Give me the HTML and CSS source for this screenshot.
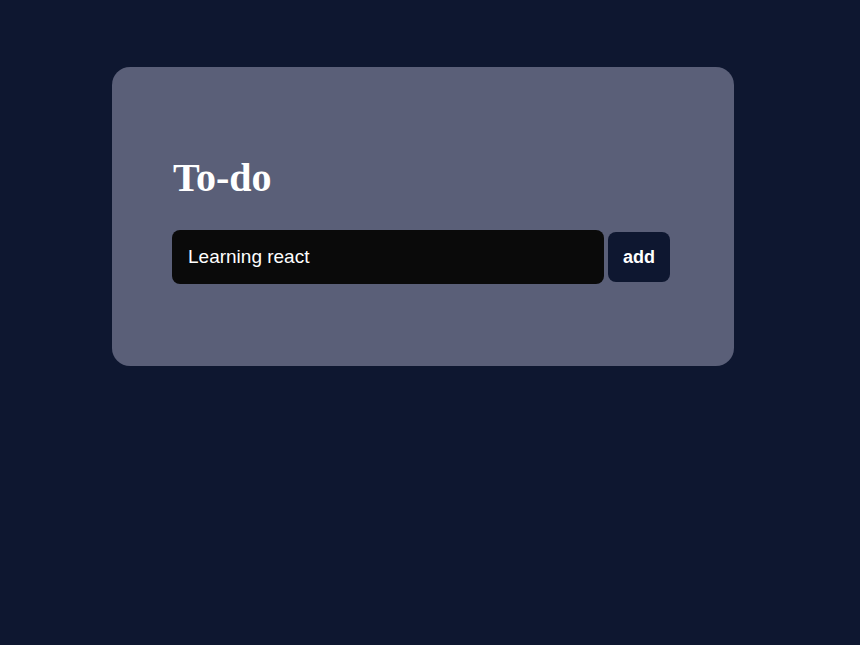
FILE: index.html
```html
<!DOCTYPE html>
<html>
<head>
<meta charset="utf-8">
<link rel="stylesheet" href="styles.css">
</head>
<body>
<div class="card">
  <h1 class="title">To-do</h1>
  <form class="row">
    <input class="task" type="text" value="Learning react">
    <button class="add" type="button">add</button>
  </form>
</div>
</body>
</html>
```
FILE: styles.css
```css
html, body {
  margin: 0;
  padding: 0;
  background: #0e1730;
  height: 100%;
}
body {
  padding: 67px 0 0 112px;
  box-sizing: border-box;
}
.card {
  width: 622px;
  height: 299px;
  box-sizing: border-box;
  background: #5a5f78;
  border-radius: 18px;
  padding: 88px 60px 0 60px;
}
.title {
  margin: 0 0 0 1px;
  font-family: "Liberation Serif", serif;
  font-weight: bold;
  font-size: 40px;
  line-height: 46px;
  color: #ffffff;
}
.row {
  display: flex;
  align-items: center;
  gap: 4px;
  margin: 29px 0 0 0;
}
.task {
  width: 432px;
  height: 54px;
  box-sizing: border-box;
  background: #0a0a0a;
  border: none;
  border-radius: 8px;
  padding: 0 16px;
  color: #ffffff;
  font-family: "Liberation Sans", Arial, sans-serif;
  font-size: 19px;
  outline: none;
}
.add {
  width: 62px;
  height: 50px;
  box-sizing: border-box;
  background: #0e1730;
  border: none;
  border-radius: 8px;
  color: #ffffff;
  font-family: "Liberation Sans", Arial, sans-serif;
  font-weight: bold;
  font-size: 18px;
  padding: 0;
}
```
